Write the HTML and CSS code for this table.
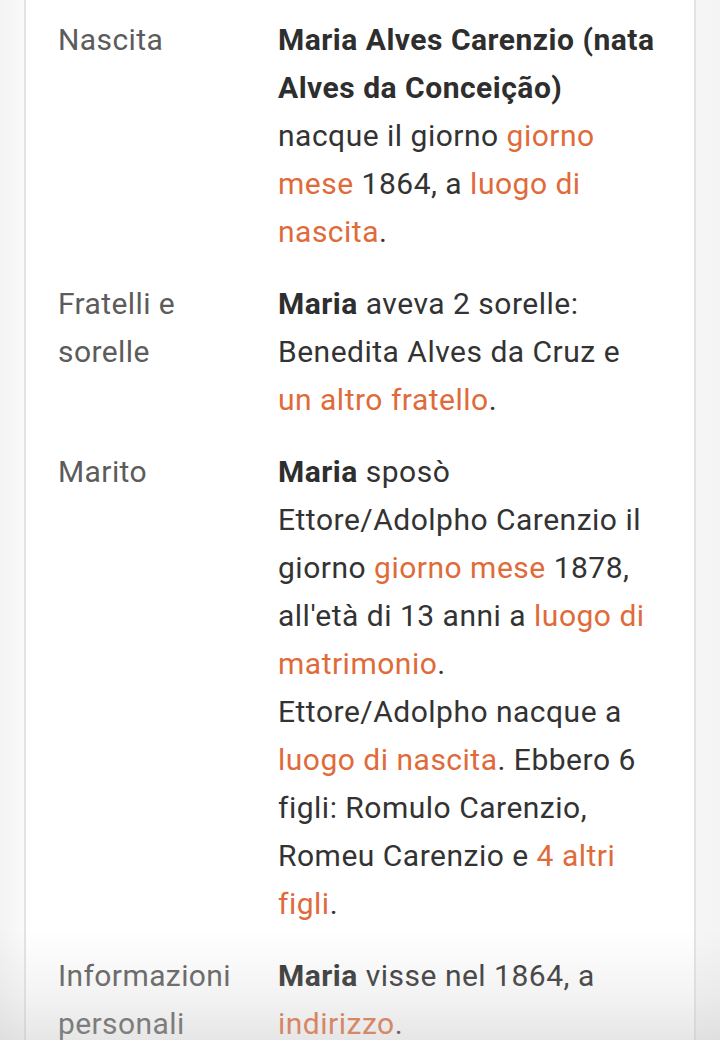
FILE: index.html
```html
<!DOCTYPE html>
<html lang="it">
<head>
<meta charset="utf-8">
<link rel="stylesheet" href="styles.css">
</head>
<body>
<div class="viewport">
  <div class="card">
    <div class="row">
      <div class="label">Nascita</div>
      <div class="value"><b>Maria Alves Carenzio (nata Alves da Conceição)</b> nacque il giorno <a>giorno mese</a> 1864, a <a>luogo di nascita</a>.</div>
    </div>
    <div class="row">
      <div class="label">Fratelli e sorelle</div>
      <div class="value"><b>Maria</b> aveva 2 sorelle: Benedita Alves da Cruz e <a>un altro fratello</a>.</div>
    </div>
    <div class="row">
      <div class="label">Marito</div>
      <div class="value"><b>Maria</b> sposò Ettore/Adolpho Carenzio il giorno <a>giorno mese</a> 1878, all'età di 13 anni a <a>luogo di matrimonio</a>.<br>Ettore/Adolpho nacque a <a>luogo di nascita</a>. Ebbero 6 figli: Romulo Carenzio, Romeu Carenzio e <a>4 altri figli</a>.</div>
    </div>
    <div class="row">
      <div class="label">Informazioni personali</div>
      <div class="value"><b>Maria</b> visse nel 1864, a <a>indirizzo</a>.</div>
    </div>
  </div>
  <div class="fade"></div>
</div>
<div class="strip"></div>
</body>
</html>
```

FILE: styles.css
```css
html, body {
  margin: 0;
  padding: 0;
  background: #ffffff;
}
body {
  font-family: Roboto, "Noto Sans", sans-serif;
  width: 720px;
  height: 1057px;
  overflow: hidden;
}
.viewport {
  position: relative;
  height: 1040px;
  overflow: hidden;
  background: linear-gradient(to right, #f3f3f3 0, #fafafa 24px, #ffffff 24px, #ffffff 695px, #f6f6f6 695px, #f4f4f4 720px);
  padding: 0 24px 0 24px;
  box-sizing: border-box;
}
.card {
  background: #ffffff;
  border-left: 2px solid #e3e3e3;
  border-right: 2px solid #e3e3e3;
  height: 100%;
  padding: 16px 0 0 32px;
  box-sizing: border-box;
}
.row {
  display: flex;
  gap: 20px;
  padding-bottom: 24px;
}
.label {
  width: 200px;
  flex: none;
  font-size: 30px;
  line-height: 48px;
  color: #5c5c5c;
  letter-spacing: 0.4px;
}
.value {
  width: 378px;
  flex: none;
  font-size: 30px;
  line-height: 48px;
  color: #333333;
  letter-spacing: 0.5px;
}
.value b {
  font-weight: 700;
  color: #2e2e2e;
}
.value a {
  color: #e06b3a;
  text-decoration: none;
}
.fade {
  position: absolute;
  left: 0;
  right: 0;
  bottom: 0;
  height: 110px;
  background: linear-gradient(to bottom, rgba(200,200,200,0) 0, rgba(200,200,200,0.22) 60%, rgba(190,190,190,0.38) 100%);
  pointer-events: none;
}
.strip {
  height: 17px;
  background: #ffffff;
}
```
